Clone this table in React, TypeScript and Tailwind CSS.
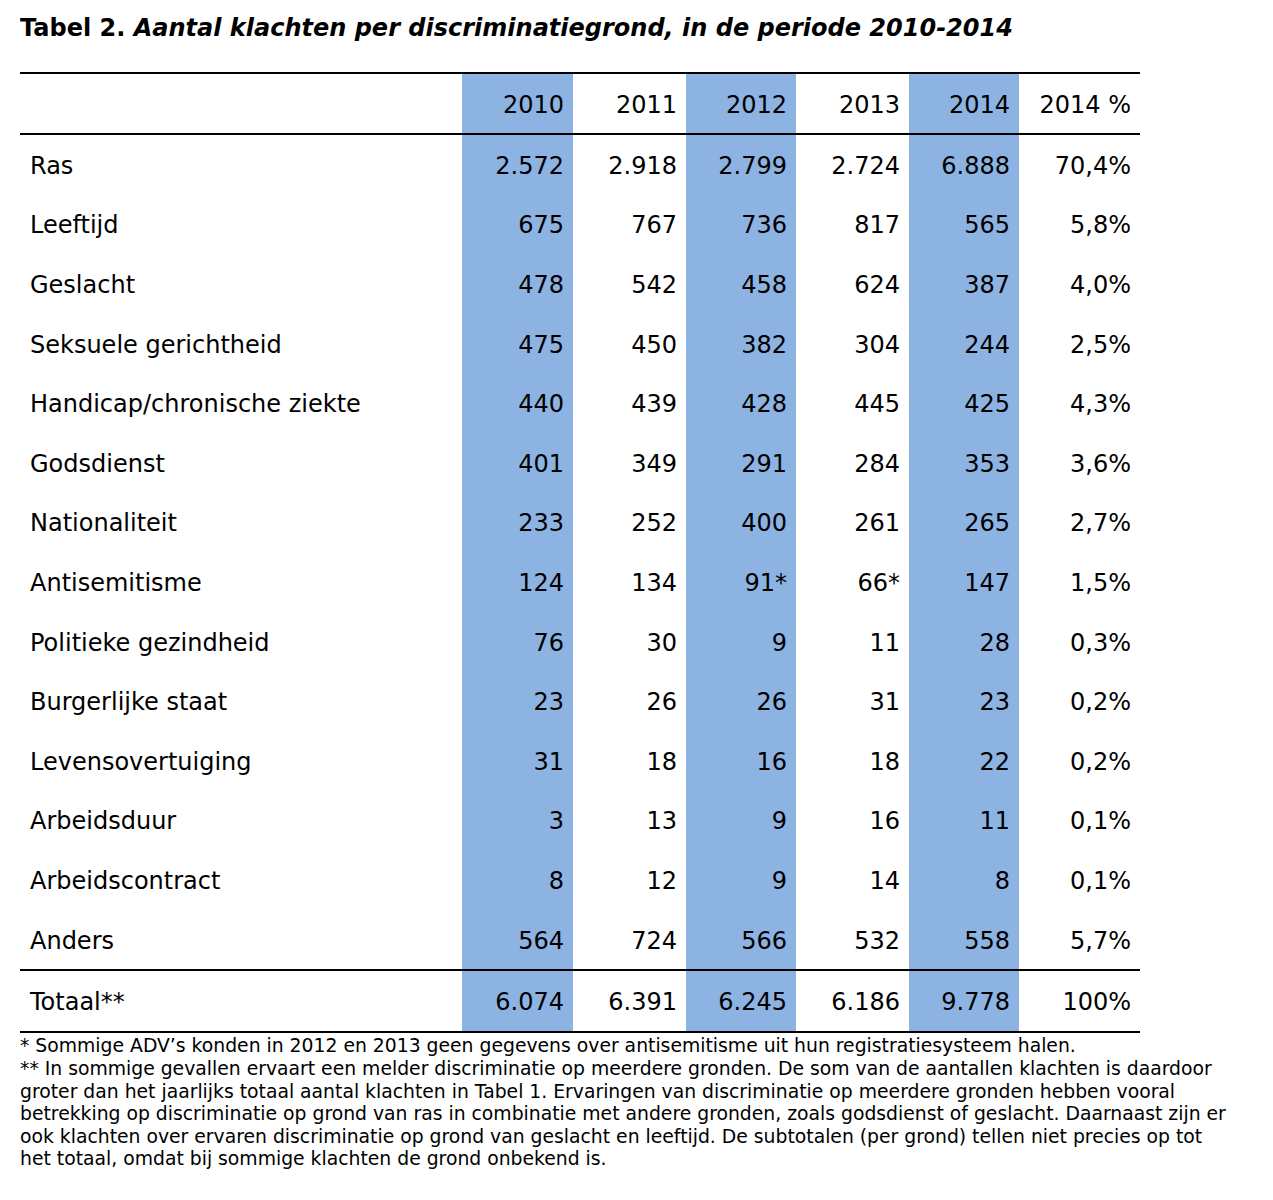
import React from "react";

const rows: [string, string, string, string, string, string, string][] = [
  ["Ras", "2.572", "2.918", "2.799", "2.724", "6.888", "70,4%"],
  ["Leeftijd", "675", "767", "736", "817", "565", "5,8%"],
  ["Geslacht", "478", "542", "458", "624", "387", "4,0%"],
  ["Seksuele gerichtheid", "475", "450", "382", "304", "244", "2,5%"],
  ["Handicap/chronische ziekte", "440", "439", "428", "445", "425", "4,3%"],
  ["Godsdienst", "401", "349", "291", "284", "353", "3,6%"],
  ["Nationaliteit", "233", "252", "400", "261", "265", "2,7%"],
  ["Antisemitisme", "124", "134", "91*", "66*", "147", "1,5%"],
  ["Politieke gezindheid", "76", "30", "9", "11", "28", "0,3%"],
  ["Burgerlijke staat", "23", "26", "26", "31", "23", "0,2%"],
  ["Levensovertuiging", "31", "18", "16", "18", "22", "0,2%"],
  ["Arbeidsduur", "3", "13", "9", "16", "11", "0,1%"],
  ["Arbeidscontract", "8", "12", "9", "14", "8", "0,1%"],
  ["Anders", "564", "724", "566", "532", "558", "5,7%"],
];

const grid = "grid grid-cols-[442px_111px_113px_110px_113px_110px_121px]";

function Row({ cells, h }: { cells: string[]; h: string }) {
  return (
    <div className={`${grid} ${h}`}>
      {cells.map((c, i) => (
        <div
          key={i}
          className={
            "flex items-center pt-[2px] " +
            (i === 0 ? "pl-[10px] " : "justify-end pr-[9px] ") +
            (i === 1 || i === 3 || i === 5 ? "bg-[#8DB3E2]" : "")
          }
        >
          {c}
        </div>
      ))}
    </div>
  );
}

export default function App() {
  return (
    <div
      className="bg-white text-black w-[1273px] h-[1200px] pt-[13px] pl-[20px]"
      style={{ fontFamily: '"DejaVu Sans", Verdana, sans-serif' }}
    >
      <div className="text-[24px] font-bold leading-[30px] h-[30px]">
        Tabel 2. <span className="italic">Aantal klachten per discriminatiegrond, in de periode 2010-2014</span>
      </div>
      <div className="mt-[29px] w-[1120px] text-[24px]">
        <div className="h-[2px] bg-black" />
        <Row cells={["", "2010", "2011", "2012", "2013", "2014", "2014 %"]} h="h-[59px]" />
        <div className="h-[2px] bg-black" />
        {rows.map((r, i) => (
          <Row key={i} cells={r} h="h-[59.6px]" />
        ))}
        <div className="h-[2px] bg-black" />
        <Row cells={["Totaal**", "6.074", "6.391", "6.245", "6.186", "9.778", "100%"]} h="h-[60px]" />
        <div className="h-[2px] bg-black" />
      </div>
      <div className="text-[18.8px] leading-[22.6px] whitespace-nowrap pt-[2px]">
        <div>* Sommige ADV’s konden in 2012 en 2013 geen gegevens over antisemitisme uit hun registratiesysteem halen.</div>
        <div>** In sommige gevallen ervaart een melder discriminatie op meerdere gronden. De som van de aantallen klachten is daardoor</div>
        <div>groter dan het jaarlijks totaal aantal klachten in Tabel 1. Ervaringen van discriminatie op meerdere gronden hebben vooral</div>
        <div>betrekking op discriminatie op grond van ras in combinatie met andere gronden, zoals godsdienst of geslacht. Daarnaast zijn er</div>
        <div>ook klachten over ervaren discriminatie op grond van geslacht en leeftijd. De subtotalen (per grond) tellen niet precies op tot</div>
        <div>het totaal, omdat bij sommige klachten de grond onbekend is.</div>
      </div>
    </div>
  );
}
